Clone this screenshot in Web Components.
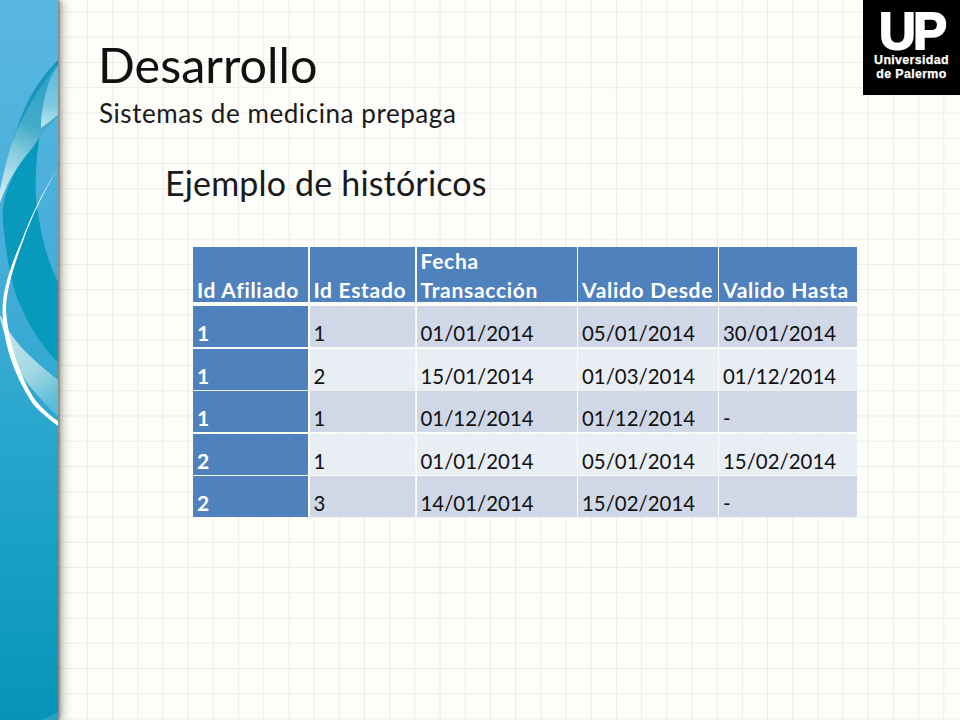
<!DOCTYPE html>
<html lang="es">
<head>
<meta charset="utf-8">
<title>Desarrollo</title>
<style>
  html, body { margin: 0; padding: 0; }
  body { width: 960px; height: 720px; overflow: hidden; font-family: Lato, "Open Sans", sans-serif; color: #111; }
</style>
</head>
<body>
<slide-page>
  <side-art slot="side"></side-art>
  <slide-header slot="head" title="Desarrollo" subtitle="Sistemas de medicina prepaga"></slide-header>
  <up-logo slot="logo"></up-logo>
  <slide-section heading="Ejemplo de históricos">
    <data-table
      head="Id Afiliado|Id Estado|Fecha Transacción|Valido Desde|Valido Hasta"
      rows="1,1,01/01/2014,05/01/2014,30/01/2014|1,2,15/01/2014,01/03/2014,01/12/2014|1,1,01/12/2014,01/12/2014,-|2,1,01/01/2014,05/01/2014,15/02/2014|2,3,14/01/2014,15/02/2014,-"></data-table>
  </slide-section>
</slide-page>

<script>
class SlidePage extends HTMLElement {
  constructor() {
    super();
    this.attachShadow({ mode: "open" });
    this.shadowRoot.innerHTML = `
      <style>
        :host {
          display: grid;
          grid-template-columns: 58px 1fr 97px;
          grid-template-rows: 95px 1fr;
          width: 960px;
          height: 720px;
          background-color: #fdfdfa;
          background-image:
            linear-gradient(to right, #ebebe7 1px, transparent 1px),
            linear-gradient(to bottom, #ebebe7 1px, transparent 1px);
          background-size: 25.2px 25.25px;
          background-position: 11.4px 11.5px;
        }
        .side { grid-column: 1; grid-row: 1 / 3; display: block; }
        .main { grid-column: 2 / 4; grid-row: 2; }
      </style>
      <div class="side"><slot name="side"></slot></div>
      <slot name="head"></slot>
      <slot name="logo"></slot>
      <div class="main"><slot></slot></div>`;
  }
}

class SideArt extends HTMLElement {
  constructor() {
    super();
    this.attachShadow({ mode: "open" });
    this.shadowRoot.innerHTML = `
      <style>
        :host {
          display: block;
          width: 58px;
          height: 720px;
          box-shadow: 2px 0 2px rgba(70, 70, 60, .5), 5px 0 9px rgba(70, 70, 60, .35);
        }
        svg { display: block; }
      </style>
      <svg width="58" height="720" viewBox="0 0 58 720">
        <defs>
          <linearGradient id="bg" x1="0" y1="0" x2="0" y2="1">
            <stop offset="0" stop-color="#59b7e2"/>
            <stop offset=".35" stop-color="#47aed9"/>
            <stop offset=".62" stop-color="#26a6cd"/>
            <stop offset="1" stop-color="#0595b8"/>
          </linearGradient>
          <linearGradient id="band" gradientUnits="userSpaceOnUse" x1="50" y1="85" x2="3" y2="195">
            <stop offset="0" stop-color="#2fa4c8"/>
            <stop offset=".38" stop-color="#45abca"/>
            <stop offset=".66" stop-color="#8fcfdf"/>
            <stop offset="1" stop-color="#cdeaf0"/>
          </linearGradient>
          <linearGradient id="wedge" gradientUnits="userSpaceOnUse" x1="55" y1="70" x2="42" y2="128">
            <stop offset="0" stop-color="#5fbcdc"/>
            <stop offset=".6" stop-color="#7ccae3"/>
            <stop offset="1" stop-color="#c4e7ef"/>
          </linearGradient>
          <linearGradient id="stripe" gradientUnits="userSpaceOnUse" x1="50" y1="70" x2="12" y2="145">
            <stop offset="0" stop-color="#1a94bb"/>
            <stop offset=".7" stop-color="#1c97bd"/>
            <stop offset="1" stop-color="#4aaecb"/>
          </linearGradient>
          <linearGradient id="low" gradientUnits="userSpaceOnUse" x1="0" y1="320" x2="58" y2="400">
            <stop offset="0" stop-color="#cbe9ee"/>
            <stop offset=".6" stop-color="#a4d9e4"/>
            <stop offset="1" stop-color="#5cbbd7"/>
          </linearGradient>
        </defs>
        <rect width="58" height="720" fill="url(#bg)"/>
        <path d="M40 135C22 160 8 178 3 207 2 220 4 232 5 240 8 265 12 285 18 300 26 320 42 348 58 362V282C48 262 42 240 38 213 35 198 34 170 40 135Z" fill="#079abc"/>
        <path d="M58 60C46 72 30 92 20 120 16 130 14 136 12 143 8 155 3 175 0 190V203C8 178 22 160 33 147 40 136 50 124 58 117Z" fill="url(#band)"/>
        <path d="M58 60C46 72 30 92 20 120 16 130 14 136 12 143 14 141 15 135 17 130 18 128 26 110 37 93 44 82 52 72 58 64Z" fill="url(#stripe)"/>
        <path d="M58 66C50 76 47 87 45 97 42 108 41 118 41 128 46 124 52 120 58 115Z" fill="url(#wedge)"/>
        <path d="M0 315C3 320 5 325 8 330 14 338 20 347 27 353 36 362 48 372 58 380V416C48 408 40 398 33 390 24 380 18 368 13 357 8 345 3 330 0 318Z" fill="url(#low)"/>
        <path d="M58 169C46 185 30 218 22 240 12 262 2 290 2.5 312 3 340 12 372 33 404 40 412 50 420 58 426V421C48 414 42 408 36 401 20 378 8 340 6 310 6 290 15 262 23.5 240 31 218 47 185 58 169Z" fill="#fff"/>
        <path d="M42 720L58 712V720Z" fill="#2ba0bf"/>
      </svg>`;
  }
}

class SlideHeader extends HTMLElement {
  constructor() {
    super();
    this.attachShadow({ mode: "open" });
    this.shadowRoot.innerHTML = `
      <style>
        :host { display: block; padding: 35px 0 0 41px; white-space: nowrap; }
        h1 { margin: 0 0 0 -1px; font-weight: 400; font-size: 48.5px; line-height: 58px; color: #111; }
        p { margin: 5px 0 0; font-size: 26px; line-height: 30px; letter-spacing: .57px; color: #1a1a1a; }
      </style>
      <h1>${this.getAttribute("title")}</h1>
      <p>${this.getAttribute("subtitle")}</p>`;
  }
}

class UpLogo extends HTMLElement {
  constructor() {
    super();
    this.attachShadow({ mode: "open" });
    this.shadowRoot.innerHTML = `
      <style>
        :host {
          display: flex;
          flex-direction: column;
          align-items: center;
          width: 97px;
          height: 95px;
          background: #000;
          color: #fff;
          font-family: "Liberation Sans", Arial, sans-serif;
          font-weight: 700;
          box-sizing: border-box;
          padding-top: 11px;
        }
        .mark { font-size: 51px; line-height: 42px; letter-spacing: -3px; -webkit-text-stroke: 1.8px #fff; }
        .name { font-size: 12.4px; line-height: 14px; letter-spacing: .35px; -webkit-text-stroke: .25px #fff; }
      </style>
      <span class="mark">UP</span>
      <span class="name">Universidad</span>
      <span class="name">de Palermo</span>`;
  }
}

class SlideSection extends HTMLElement {
  constructor() {
    super();
    this.attachShadow({ mode: "open" });
    this.shadowRoot.innerHTML = `
      <style>
        :host { display: block; padding: 66px 0 0 107px; }
        h2 { margin: 0 0 42px; font-weight: 400; font-size: 34px; line-height: 44px; letter-spacing: .17px; color: #1a1a1a; }
        .body { padding-left: 28px; }
      </style>
      <h2>${this.getAttribute("heading")}</h2>
      <div class="body"><slot></slot></div>`;
  }
}

class DataTable extends HTMLElement {
  connectedCallback() {
    this.attachShadow({ mode: "open" });
    const head = this.getAttribute("head").split("|");
    const rows = this.getAttribute("rows").split("|").map((r) => r.split(","));
    let html = `
      <style>
        :host {
          display: grid;
          grid-template-columns: 115px 105.5px 160px 139.5px 137.5px;
          grid-template-rows: 59px repeat(5, 42.6px);
          column-gap: 1.5px;
          width: 664px;
          font-size: 20.4px;
          line-height: 29px;
          color: #111;
        }
        div { padding: 0 3px 0 4px; display: flex; align-items: flex-end; margin-bottom: 1.5px; }
        span { margin-bottom: -1px; }
        .th, .first { background: #4f81bd; color: #fff; font-weight: 700; font-size: 21px; letter-spacing: .7px; }
        .th { margin-bottom: 4px; }
        .th span { margin-bottom: -2px; }
        .first span { margin-bottom: 0; }
        .odd { background: #d0d8e8; }
        .even { background: #e9edf4; }
      </style>`;
    head.forEach((h) => { html += `<div class="th"><span>${h}</span></div>`; });
    rows.forEach((row, i) => {
      row.forEach((c, j) => {
        html += `<div class="${j === 0 ? "first" : i % 2 ? "even" : "odd"}"><span>${c}</span></div>`;
      });
    });
    this.shadowRoot.innerHTML = html;
  }
}

customElements.define("slide-page", SlidePage);
customElements.define("side-art", SideArt);
customElements.define("slide-header", SlideHeader);
customElements.define("up-logo", UpLogo);
customElements.define("slide-section", SlideSection);
customElements.define("data-table", DataTable);
</script>
</body>
</html>
